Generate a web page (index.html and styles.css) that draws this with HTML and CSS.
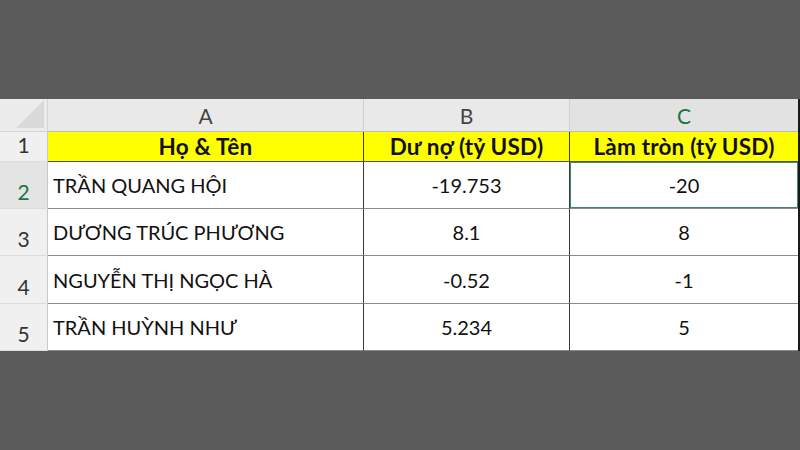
FILE: index.html
```html
<!DOCTYPE html>
<html lang="vi">
<head>
<meta charset="utf-8">
<title>Làm tròn</title>
<link rel="stylesheet" href="styles.css">
</head>
<body>
<div class="sheet">
  <div class="corner"><span class="tri"></span></div>
  <div class="colhead">A</div>
  <div class="colhead">B</div>
  <div class="colhead sel">C</div>

  <div class="rowhead">1</div>
  <div class="cell title">Họ &amp; Tên</div>
  <div class="cell title">Dư nợ (tỷ USD)</div>
  <div class="cell title">Làm tròn (tỷ USD)</div>

  <div class="rowhead sel">2</div>
  <div class="cell name">TRẦN QUANG HỘI</div>
  <div class="cell num">-19.753</div>
  <div class="cell num active">-20</div>

  <div class="rowhead">3</div>
  <div class="cell name">DƯƠNG TRÚC PHƯƠNG</div>
  <div class="cell num">8.1</div>
  <div class="cell num">8</div>

  <div class="rowhead">4</div>
  <div class="cell name">NGUYỄN THỊ NGỌC HÀ</div>
  <div class="cell num">-0.52</div>
  <div class="cell num">-1</div>

  <div class="rowhead">5</div>
  <div class="cell name">TRẦN HUỲNH NHƯ</div>
  <div class="cell num">5.234</div>
  <div class="cell num">5</div>
</div>
</body>
</html>
```
FILE: styles.css
```css
html, body {
  margin: 0;
  padding: 0;
  background: #5b5b5b;
  width: 800px;
  height: 450px;
  overflow: hidden;
}
body {
  padding-top: 99px;
  box-sizing: border-box;
  font-family: Lato, "Open Sans", sans-serif;
}
.sheet {
  display: grid;
  grid-template-columns: 48px 316px 206px 228px;
  grid-template-rows: 33px 30px 47px 47px 48px 47px;
  width: 798px;
  background: #ffffff;
  border-right: 2px solid #1a1a1a;
}
.corner {
  background: #ececec;
  border-right: 1px solid #d4d4d4;
  border-bottom: 1px solid #d4d4d4;
  position: relative;
}
.tri {
  position: absolute;
  right: 3px;
  bottom: 3px;
  width: 28px;
  height: 28px;
  background: #d9d9d9;
  clip-path: polygon(100% 0, 100% 100%, 0 100%);
}
.colhead {
  background: #e9e9e9;
  border-right: 1px solid #d0d0d0;
  border-bottom: 1px solid #bdbdbd;
  color: #444;
  font-size: 21px;
  display: flex;
  align-items: flex-end;
  justify-content: center;
  padding-bottom: 3px;
  box-sizing: border-box;
}
.colhead.sel {
  color: #217346;
  background: #e2e2e2;
  border-right: none;
}
.rowhead {
  background: #f0f0f0;
  border-right: 1px solid #c8c8c8;
  border-bottom: 1px solid #dcdcdc;
  color: #333;
  font-size: 21px;
  display: flex;
  align-items: flex-end;
  justify-content: center;
  padding-bottom: 4px;
  box-sizing: border-box;
}
.rowhead.sel {
  color: #217346;
  background: #e4e4e4;
}
.cell {
  border-right: 1px solid #3a3a3a;
  border-bottom: 1px solid #8a8a8a;
  display: flex;
  align-items: center;
  font-size: 20px;
  color: #111;
  box-sizing: border-box;
}
.cell:nth-child(4n) {
  border-right: none;
}
.title {
  background: #ffff00;
  font-weight: bold;
  justify-content: center;
  font-size: 22.5px;
  letter-spacing: 0.2px;
  border-bottom-color: #555;
}
.name {
  padding-left: 5px;
}
.num {
  justify-content: center;
}
.active {
  box-shadow: inset 0 0 0 1px #3f8a62;
}
```
